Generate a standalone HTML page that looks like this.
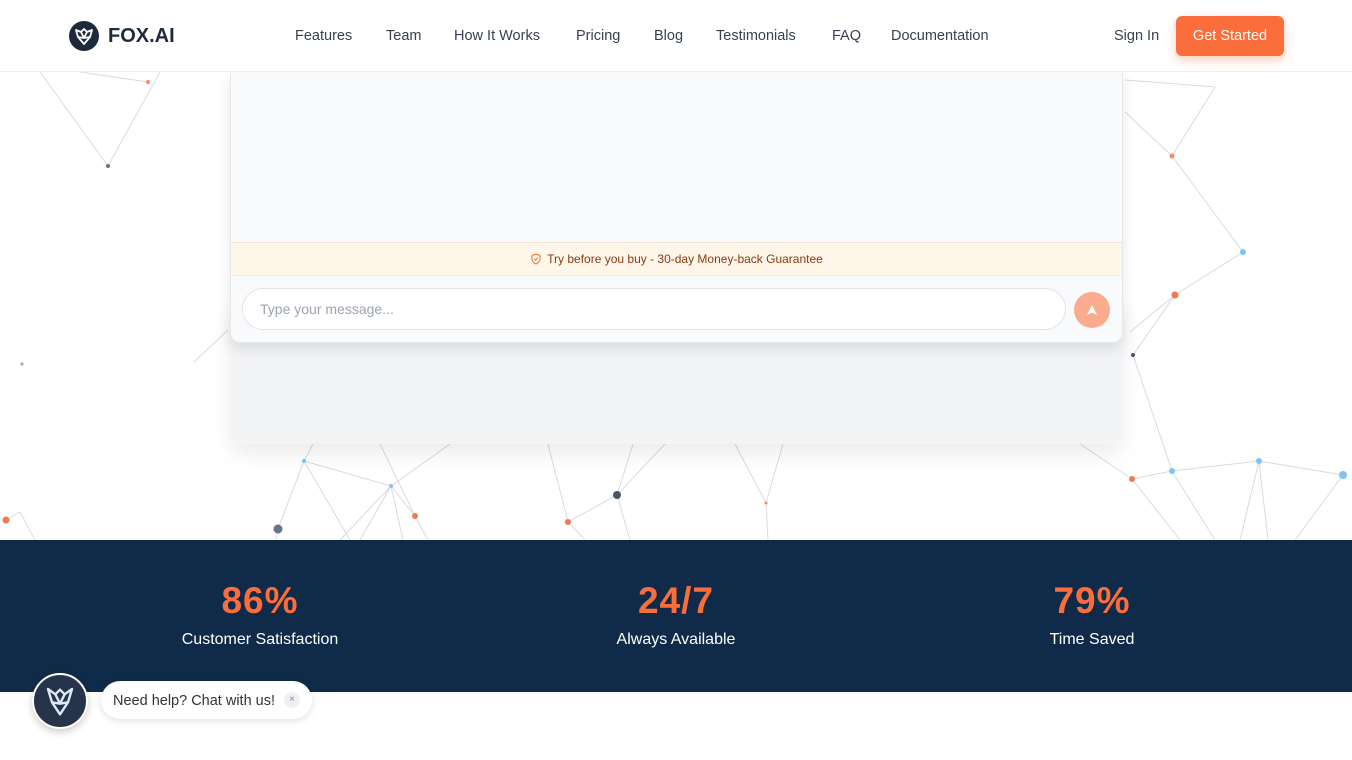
<!DOCTYPE html>
<html><head><style>
*{margin:0;padding:0;box-sizing:border-box}
body{width:1352px;height:760px;overflow:hidden;background:#fff;font-family:"Liberation Sans",sans-serif;position:relative}
.nav{position:absolute;top:0;left:0;width:1352px;height:72px;background:#fff;border-bottom:1px solid #eceef1;z-index:5}
.logo{position:absolute;left:69px;top:21px;display:flex;align-items:center;gap:9px;font-weight:bold;font-size:20px;color:#1e2a3b}
.links a{position:absolute;top:28px;font-size:14.5px;color:#374151;text-decoration:none}
.signin{position:absolute;left:1114px;top:28px;font-size:14.5px;color:#374151}
.btn{position:absolute;left:1176px;top:16px;width:108px;height:40px;background:#fb6d3a;color:#fff;border-radius:6px;font-size:14.5px;display:flex;align-items:center;justify-content:center;box-shadow:0 4px 10px rgba(251,109,58,.35)}
svg.bg{position:absolute;left:0;top:72px}
.under{position:absolute;left:230px;top:300px;width:893px;height:144px;background:#f3f4f6;border-radius:0 0 14px 14px;box-shadow:0 10px 20px rgba(0,0,0,.08)}
.chat{position:absolute;left:230px;top:72px;width:893px;height:271px;background:#f8fafc;border:1px solid #e5e7eb;border-top:none;border-radius:0 0 10px 10px;box-shadow:0 6px 14px rgba(0,0,0,.1);overflow:hidden}
.guar{position:absolute;top:170px;left:0;width:100%;height:34px;background:#fef6e9;border-top:1px solid #f1e6d3;border-bottom:1px solid #eee;font-size:12px;color:#8a3b12;display:flex;align-items:center;justify-content:center;gap:5px}
.inp{position:absolute;left:11px;top:216px;width:824px;height:42px;border:1px solid #e2e5ea;border-radius:21px;background:#fff;font-size:14px;color:#9ca3af;padding:12px 17px}
.send{position:absolute;left:843px;top:220px;width:36px;height:36px;border-radius:50%;background:#fbab8e;display:flex;align-items:center;justify-content:center}
.stats{position:absolute;top:540px;left:0;width:1352px;height:152px;background:#102b49}
.st{position:absolute;top:40px;width:300px;text-align:center;color:#fff}
.st b{display:block;color:#fb6d3a;font-size:37px;letter-spacing:1px}
.st span{display:block;font-size:16px;margin-top:9px}
.av{position:absolute;left:32px;top:673px;width:56px;height:56px;border-radius:50%;background:#25344a;border:2px solid #fff;box-shadow:0 3px 8px rgba(0,0,0,.2);display:flex;align-items:center;justify-content:center}
.help{position:absolute;left:101px;top:681px;width:211px;height:38px;background:#fff;border-radius:19px;box-shadow:0 2px 8px rgba(0,0,0,.12);font-size:14.5px;color:#333;padding:12px 12px}
.x{position:absolute;right:12px;top:11px;width:16px;height:16px;border-radius:50%;background:#eef0f5;font-size:10px;color:#888;text-align:center;line-height:16px}
</style></head><body>
<svg class="bg" width="1352" height="468" stroke-width="1">
<g stroke="#9aa4b2" opacity=".4" fill="none">
<path d="M40 0 L108 94 L160 0 M80 0 L148 10"/>
<path d="M228 258 L194 290"/>
<path d="M1125 40 L1172 84 L1215 15 M1125 8 L1215 15 M1172 84 L1243 180 M1175 223 L1243 180 M1130 260 L1175 223 M1133 283 L1175 223 M1133 283 L1172 399 L1132 407 L1080 372 M1172 399 L1259 389 L1343 403 M1259 389 L1240 468 M1259 389 L1268 468 M1343 403 L1295 468 M1172 399 L1215 468 M1132 407 L1180 468"/>
<path d="M304 389 L278 457 L276 468 M304 389 L391 414 L415 444 L428 468 M391 414 L450 372 M391 414 L403 468 M304 389 L350 468 M391 414 L340 468 M415 444 L380 372 M304 389 L313 372 M391 414 L360 468"/>
<path d="M617 423 L568 450 L548 372 M617 423 L633 372 M617 423 L630 468 M568 450 L585 468 M617 423 L665 372 M766 431 L735 372 M766 431 L783 372 M766 431 L768 468 M6 448 L20 440 L35 468"/>
</g>
<g>
<circle cx="108" cy="94" r="2" fill="#64748b"/><circle cx="148" cy="10" r="2" fill="#fb8a62"/><circle cx="22" cy="292" r="1.5" fill="#94a3b8"/>
<circle cx="1172" cy="84" r="2.5" fill="#fb8a62"/><circle cx="1243" cy="180" r="3" fill="#7cc4f5"/><circle cx="1175" cy="223" r="3.5" fill="#f07a50"/><circle cx="1133" cy="283" r="2" fill="#475569"/>
<circle cx="1172" cy="399" r="3" fill="#7cc4f5"/><circle cx="1132" cy="407" r="3" fill="#f07a50"/><circle cx="1259" cy="389" r="3" fill="#7cc4f5"/><circle cx="1343" cy="403" r="4" fill="#7cc4f5"/>
<circle cx="304" cy="389" r="2" fill="#7cc4f5"/><circle cx="278" cy="457" r="4.5" fill="#64748b"/><circle cx="391" cy="414" r="2" fill="#7cc4f5"/><circle cx="415" cy="444" r="3" fill="#f07a50"/>
<circle cx="617" cy="423" r="4" fill="#475569"/><circle cx="568" cy="450" r="3" fill="#f07a50"/><circle cx="766" cy="431" r="1.5" fill="#fb8a62"/><circle cx="6" cy="448" r="3.5" fill="#f07a50"/>
</g></svg>
<div class="nav">
<div class="logo"><svg width="30" height="30" viewBox="0 0 30 30"><circle cx="15" cy="15" r="15" fill="#1e2a3b"/><path d="M7 9 L12 11 L15 8 L18 11 L23 9 L21 16 L15 23 L9 16 Z M12 11 L15 17 L18 11 M9 16 L15 17 L21 16" stroke="#fff" stroke-width="1.8" fill="none" stroke-linejoin="round"/></svg>FOX.AI</div>
<div class="links"><a style="left:295px">Features</a><a style="left:386px">Team</a><a style="left:454px">How It Works</a><a style="left:576px">Pricing</a><a style="left:654px">Blog</a><a style="left:716px">Testimonials</a><a style="left:832px">FAQ</a><a style="left:891px">Documentation</a></div>
<div class="signin">Sign In</div><div class="btn">Get Started</div>
</div>
<div class="under"></div>
<div class="chat">
<div class="guar"><svg width="12" height="12" viewBox="0 0 24 24" fill="none" stroke="#f07a30" stroke-width="2.2"><path d="M12 2 L20 5 V11 C20 16 16 20 12 22 C8 20 4 16 4 11 V5 Z"/><path d="M8.5 12 L11 14.5 L15.5 9.5"/></svg>Try before you buy - 30-day Money-back Guarantee</div>
<div class="inp">Type your message...</div>
<div class="send"><svg width="14" height="14" viewBox="0 0 14 14"><path d="M7 2 L12 12 L7 9.5 L2 12 Z" fill="#fff"/></svg></div>
</div>
<div class="stats">
<div class="st" style="left:110px"><b>86%</b><span>Customer Satisfaction</span></div>
<div class="st" style="left:526px"><b>24/7</b><span>Always Available</span></div>
<div class="st" style="left:942px"><b>79%</b><span>Time Saved</span></div>
</div>
<div class="av"><svg width="40" height="40" viewBox="0 0 30 30"><path d="M6 6 L11.5 10 L15 6.5 L18.5 10 L24 6 L21 16 L15 25 L9 16 Z M11.5 10 L15 17 L18.5 10 M9 16 L15 17 L21 16" stroke="#dfe8f5" stroke-width="1.8" fill="none" stroke-linejoin="round"/></svg></div>
<div class="help">Need help? Chat with us!<div class="x">×</div></div>
</body></html>
